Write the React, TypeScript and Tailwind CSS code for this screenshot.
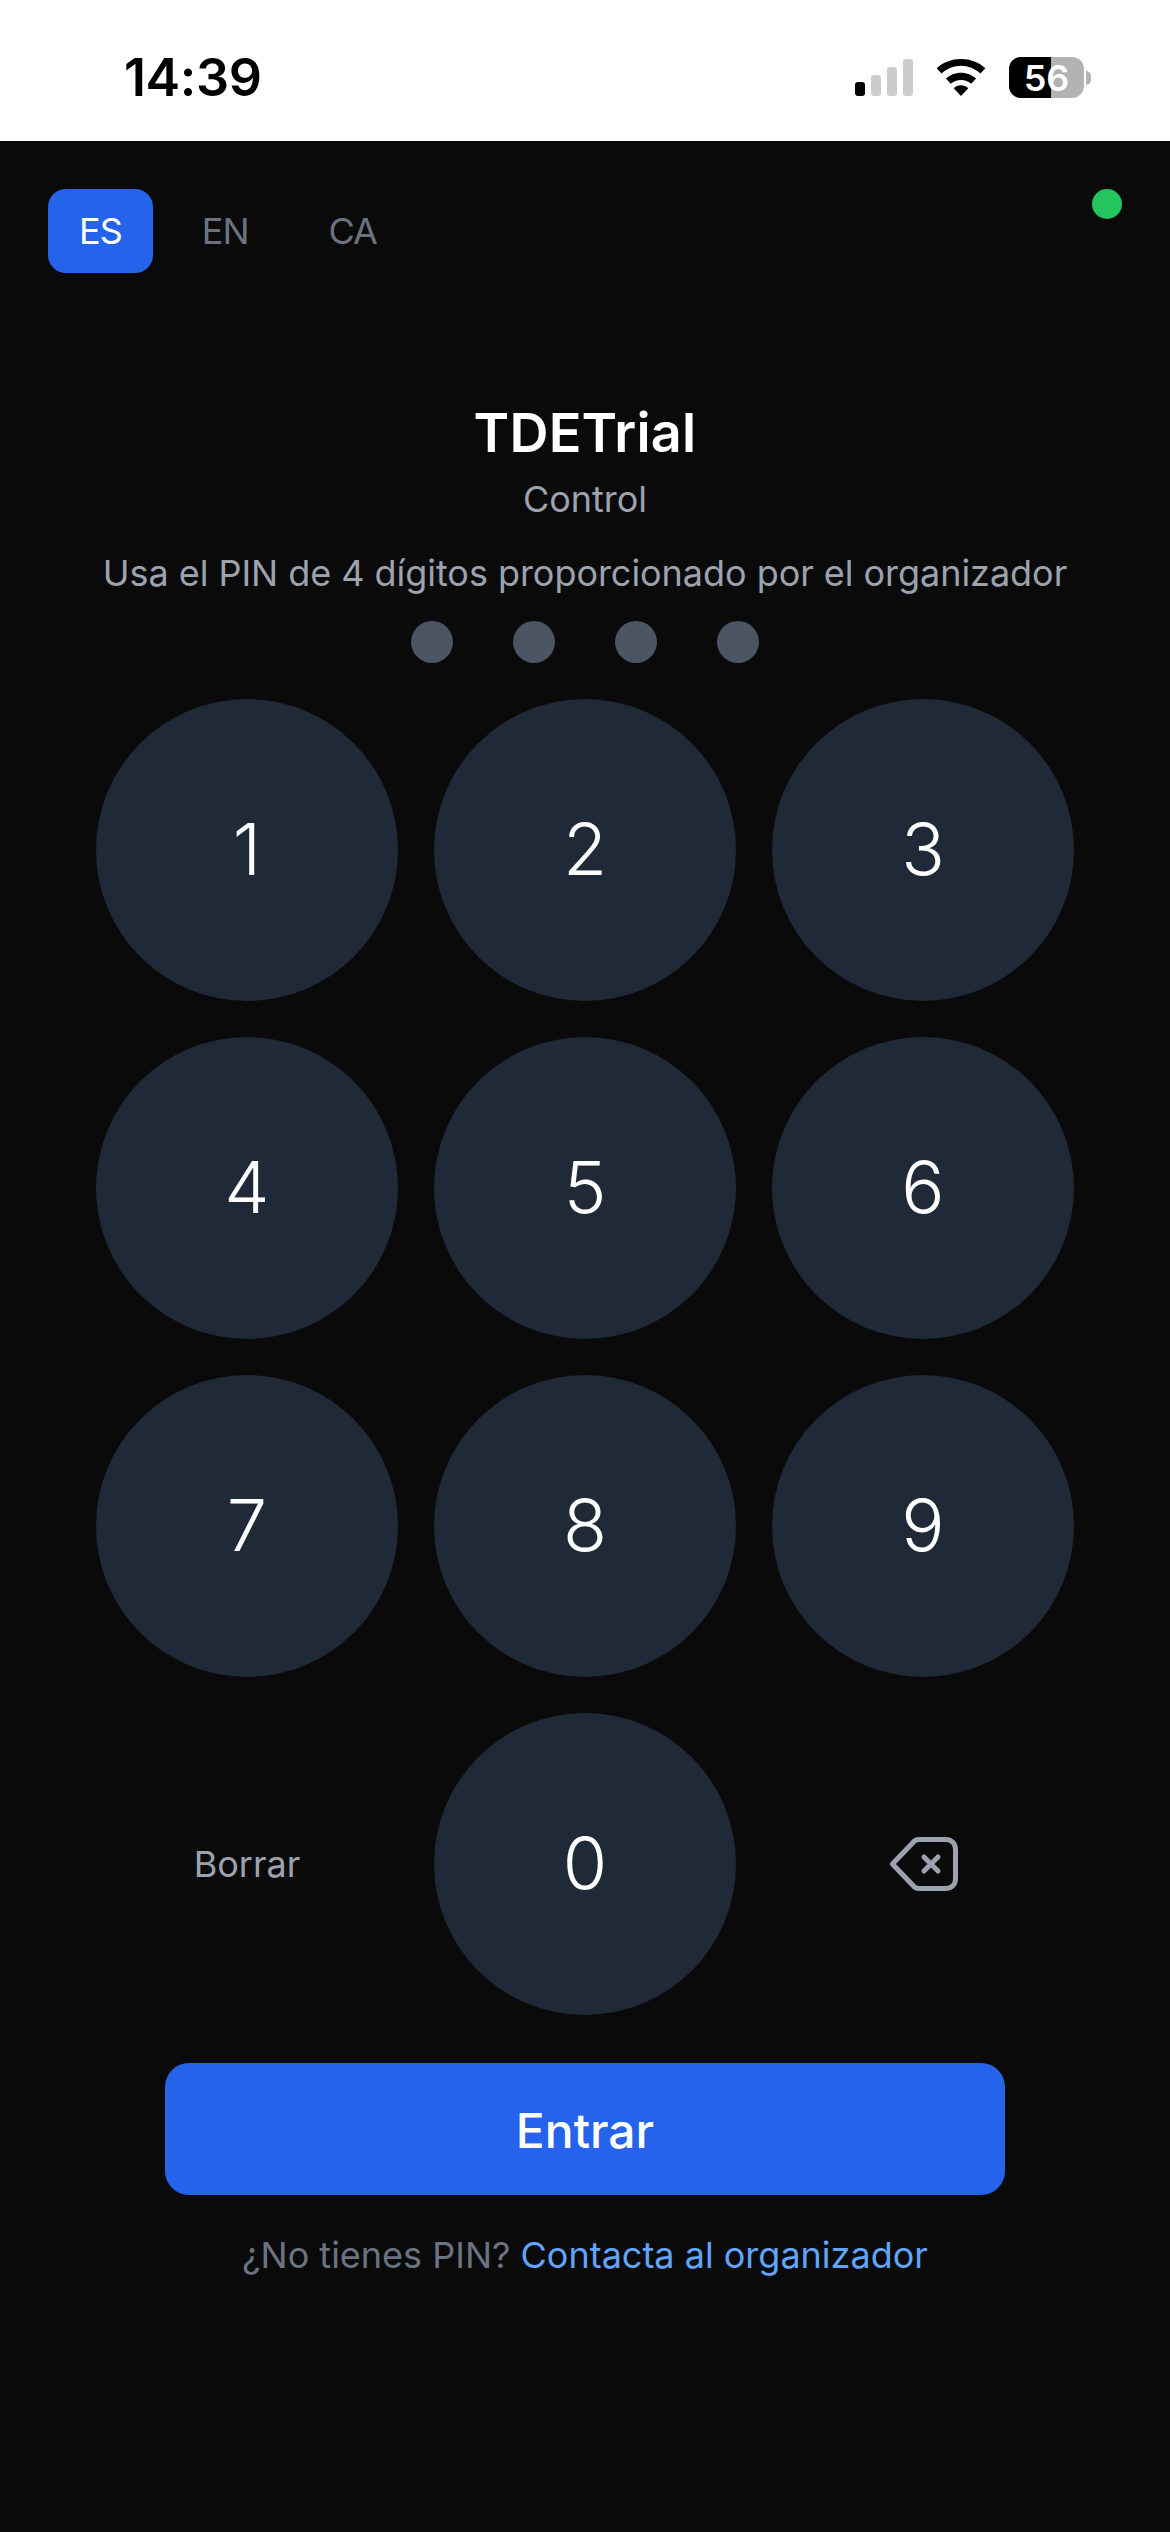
const font = { fontFamily: "Inter, 'Liberation Sans', sans-serif" };

const languages = ["ES", "EN", "CA"];
const keys = ["1", "2", "3", "4", "5", "6", "7", "8", "9"];

function StatusBar() {
  return (
    <div className="flex h-[141px] items-start justify-between bg-white pr-[79px] pl-[124px]">
      <span className="mt-[47px] text-[52px] leading-[62px] font-semibold tracking-[-0.4px] text-black">14:39</span>
      <div className="mt-[59px] flex items-start">
        <svg width="58" height="37" viewBox="0 0 58 37" className="block">
          <rect x="0" y="23" width="10" height="14" rx="3" fill="#000" />
          <rect x="16" y="16" width="10" height="21" rx="3" fill="#ccc" />
          <rect x="32" y="8" width="10" height="29" rx="3" fill="#ccc" />
          <rect x="48" y="0" width="10" height="37" rx="3" fill="#ccc" />
        </svg>
        <svg width="52" height="37" viewBox="0 0 52 38" className="ml-[22px] block">
          <path d="M26 0C16 0 7.500 3.500 1 9.500l5 5.500C11.500 10 18.500 7 26 7s14.500 3 20 8l5-5.500C44.500 3.500 36 0 26 0z" fill="#000" />
          <path d="M26 14c-6 0-11.500 2.300-15.500 6l5 5.500c2.800-2.500 6.500-4 10.500-4s7.700 1.500 10.500 4l5-5.500c-4-3.700-9.500-6-15.500-6z" fill="#000" />
          <path d="M26 27c-3 0-5.500 1-7.500 3L26 38l7.500-8c-2-2-4.500-3-7.500-3z" fill="#000" />
        </svg>
        <div className="relative mt-[-2px] ml-[22px] flex h-[41px] w-[75px] overflow-hidden rounded-[12px] bg-[#b3b3b3]">
          <div className="h-full w-[42px] bg-black" />
          <span className="absolute inset-0 flex items-center justify-center text-[36px] leading-none font-semibold text-white">56</span>
        </div>
        <div className="mt-[12px] ml-[2px] h-[14px] w-[5px] rounded-r-full bg-[#b3b3b3]" />
      </div>
    </div>
  );
}

function BackspaceIcon() {
  return (
    <svg width="68" height="54" viewBox="0 0 68 54" fill="none" stroke="#9ca3af" strokeWidth="5" strokeLinecap="round" strokeLinejoin="round">
      <path d="M2.500 27L23 5.500C24.500 3.500 26 2.500 29 2.500H55.500c6 0 10 4 10 10v29c0 6-4 10-10 10H29c-3 0-4.500-1-6-3z" />
      <path d="M34 20l14 14M48 20L34 34" />
    </svg>
  );
}

function Key({ label }: { label: string }) {
  return (
    <button className="flex h-[302px] w-[302px] items-center justify-center rounded-full bg-[#1f2937] pb-[3px] text-[72px] font-light text-white">
      {label}
    </button>
  );
}

export default function App() {
  return (
    <div className="flex h-[2532px] w-[1170px] flex-col overflow-hidden bg-[#0a0a0a]" style={font}>
      <StatusBar />
      <div className="relative flex flex-1 flex-col">
        <div className="absolute top-[48px] right-[48px] h-[30px] w-[30px] rounded-full bg-[#22c55e]" />
        <div className="flex items-center gap-[18px] pt-12 pl-12">
          {languages.map((lang) => (
            <button
              key={lang}
              className={`h-[84px] rounded-[18px] px-[31px] text-[36px] font-normal tracking-[-1px] ${lang === "ES" ? "bg-[#2563eb] text-white" : "text-[#6b7280]"}`}
            >
              {lang}
            </button>
          ))}
        </div>
        <div className="mt-[124px] flex flex-col items-center">
          <h1 className="text-[54px] leading-[72px] font-semibold tracking-[0.2px] text-white">TDETrial</h1>
          <p className="mt-[6px] text-[36px] leading-[48px] text-[#9ca3af]">Control</p>
          <p className="mt-[26px] text-[36px] leading-[48px] tracking-[-0.04px] text-[#9ca3af]">Usa el PIN de 4 dígitos proporcionado por el organizador</p>
          <div className="mt-[24px] flex gap-[60px]">
            {[0, 1, 2, 3].map((i) => (
              <div key={i} className="h-[42px] w-[42px] rounded-full bg-[#4b5563]" />
            ))}
          </div>
          <div className="mt-[36px] grid grid-cols-3 gap-[36px]">
            {keys.map((k) => (
              <Key key={k} label={k} />
            ))}
            <button className="flex h-[302px] w-[302px] items-center justify-center text-[36px] font-normal text-[#9ca3af]">Borrar</button>
            <Key label="0" />
            <button className="flex h-[302px] w-[302px] items-center justify-center pl-[2px]">
              <BackspaceIcon />
            </button>
          </div>
          <button className="mt-[48px] h-[132px] w-[840px] rounded-[24px] bg-[#2563eb] pt-[3px] text-[48px] font-medium text-white">Entrar</button>
          <p className="mt-[36px] text-[36px] leading-[48px] text-[#6b7280]">
            ¿No tienes PIN? <span className="text-[#60a5fa]">Contacta al organizador</span>
          </p>
        </div>
      </div>
    </div>
  );
}
